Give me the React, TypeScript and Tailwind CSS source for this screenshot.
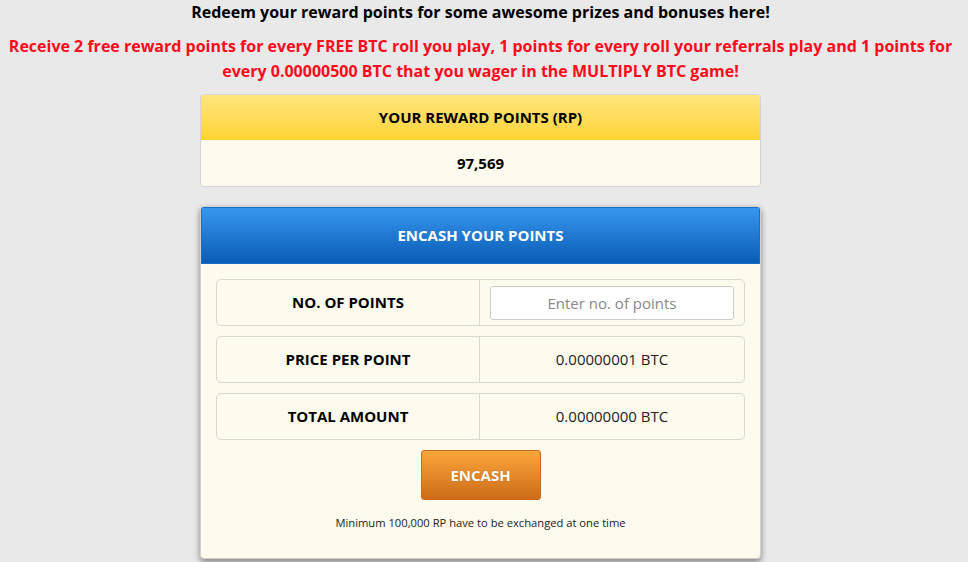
import React from "react";

function Row({ label, children }: { label: string; children: React.ReactNode }) {
  return (
    <div className="flex h-[47px] rounded-[5px] border border-[#d9d9d0] bg-[#fdfbee]">
      <div className="flex w-[263px] items-center justify-center border-r border-[#d9d9d0] text-[15px] font-bold text-black">
        {label}
      </div>
      <div className="flex flex-1 items-center justify-center text-[15px] text-[#222]">{children}</div>
    </div>
  );
}

export default function App() {
  return (
    <div
      className="min-h-[562px] w-full bg-[#e9e9e9]"
      style={{ fontFamily: '"Open Sans", "Noto Sans", sans-serif' }}
    >
      <div className="w-[961px] text-center">
        <p className="text-[16px] font-bold leading-[24px] text-black">
          Redeem your reward points for some awesome prizes and bonuses here!
        </p>
        <p className="mx-auto mt-[10px] w-[955px] text-[16px] font-bold leading-[25px] text-[#ff0a1c]">
          Receive 2 free reward points for every FREE BTC roll you play, 1 points for every roll your referrals play and 1 points for every 0.00000500 BTC that you wager in the MULTIPLY BTC game!
        </p>

        <div className="mx-auto mt-[10px] w-[561px] overflow-hidden rounded-[4px] border border-[#d4d4d4] bg-[#fefbee]">
          <div className="flex h-[45px] items-center justify-center bg-gradient-to-b from-[#ffe57c] to-[#ffd42e] text-[15px] font-bold text-black">
            YOUR REWARD POINTS (RP)
          </div>
          <div className="flex h-[46px] items-center justify-center text-[15px] font-bold text-black">97,569</div>
        </div>

        <div className="mx-auto mt-[19px] w-[561px] overflow-hidden rounded-[4px] border border-[#cfcfcf] bg-[#fdfbee] shadow-[0_3px_6px_rgba(0,0,0,0.45)]">
          <div className="flex h-[57px] items-center justify-center border border-[#1a6fc4] bg-gradient-to-b from-[#3797f0] to-[#075cb3] text-[15px] font-bold text-white">
            ENCASH YOUR POINTS
          </div>
          <div className="flex flex-col gap-[10px] px-[15px] pt-[15px]">
            <Row label="NO. OF POINTS">
              <input
                className="h-[34px] w-[244px] rounded-[3px] border border-[#cccccc] bg-white text-center text-[15px] text-[#555] outline-none placeholder:text-[#888]"
                placeholder="Enter no. of points"
                style={{ fontFamily: '"Open Sans", sans-serif' }}
              />
            </Row>
            <Row label="PRICE PER POINT">0.00000001 BTC</Row>
            <Row label="TOTAL AMOUNT">0.00000000 BTC</Row>
          </div>
          <div className="mt-[10px] flex justify-center">
            <button className="h-[50px] w-[120px] rounded-[3px] border border-[#c96a18] bg-gradient-to-b from-[#fba63a] to-[#cd6c19] text-[15px] font-bold text-white [text-shadow:0_0_1px_rgba(0,0,0,0.3)]">
              ENCASH
            </button>
          </div>
          <p className="mt-[16px] pb-[28px] text-[11.2px] leading-[14px] text-[#222]">
            Minimum 100,000 RP have to be exchanged at one time
          </p>
        </div>
      </div>
    </div>
  );
}
